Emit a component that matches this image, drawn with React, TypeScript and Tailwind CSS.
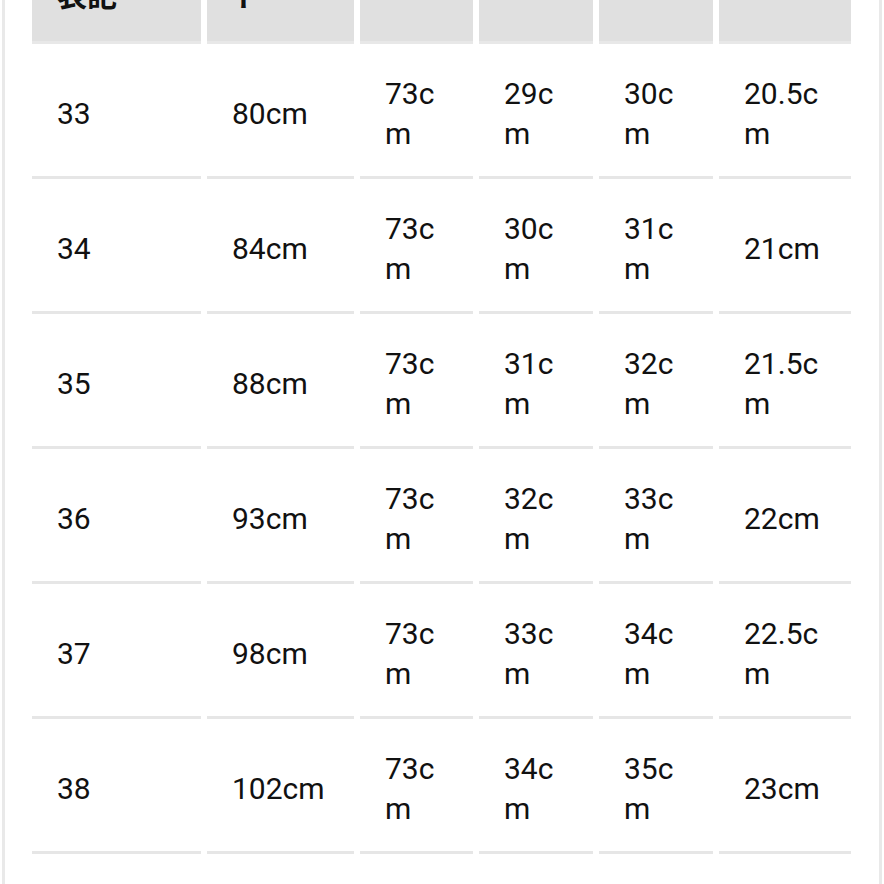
import React from "react";

const rows: string[][] = [
  ["33", "80cm", "73cm", "29cm", "30cm", "20.5cm"],
  ["34", "84cm", "73cm", "30cm", "31cm", "21cm"],
  ["35", "88cm", "73cm", "31cm", "32cm", "21.5cm"],
  ["36", "93cm", "73cm", "32cm", "33cm", "22cm"],
  ["37", "98cm", "73cm", "33cm", "34cm", "22.5cm"],
  ["38", "102cm", "73cm", "34cm", "35cm", "23cm"],
];

const headers = ["表記", "ト", "", "", "", ""];

export default function App() {
  return (
    <div className="w-[884px] h-[884px] overflow-hidden bg-white px-[2px]">
      <div
        className="h-full flex flex-col border-x-[3px] border-[#e9e9e9] pl-[27px]"
        style={{ fontFamily: "Roboto, 'Noto Sans CJK JP', sans-serif" }}
      >
        <div className="-mt-[27px] grid grid-cols-[169px_147px_113px_114px_114px_132px] gap-x-[6px]">
          {headers.map((h, i) => (
            <div
              key={i}
              className="h-[71px] bg-[#e0e0e0] border-b-[3px] border-[#e8e8e8] pl-[25px] text-[30px] leading-[40px] font-bold text-[#111]"
              style={{ fontFamily: "'Noto Sans CJK JP', sans-serif" }}
            >
              {h}
            </div>
          ))}
        </div>
        {rows.map((r, ri) => (
          <div
            key={ri}
            className="grid grid-cols-[169px_147px_113px_114px_114px_132px] gap-x-[6px]"
          >
            {r.map((c, ci) => (
              <div
                key={ci}
                className="h-[135px] border-b-[3px] border-[#e6e6e6] pl-[25px] pr-[20px] pt-[7px] flex items-center break-all text-[30px] leading-[40px] text-[#111]"
              >
                <span>{c}</span>
              </div>
            ))}
          </div>
        ))}
      </div>
    </div>
  );
}
